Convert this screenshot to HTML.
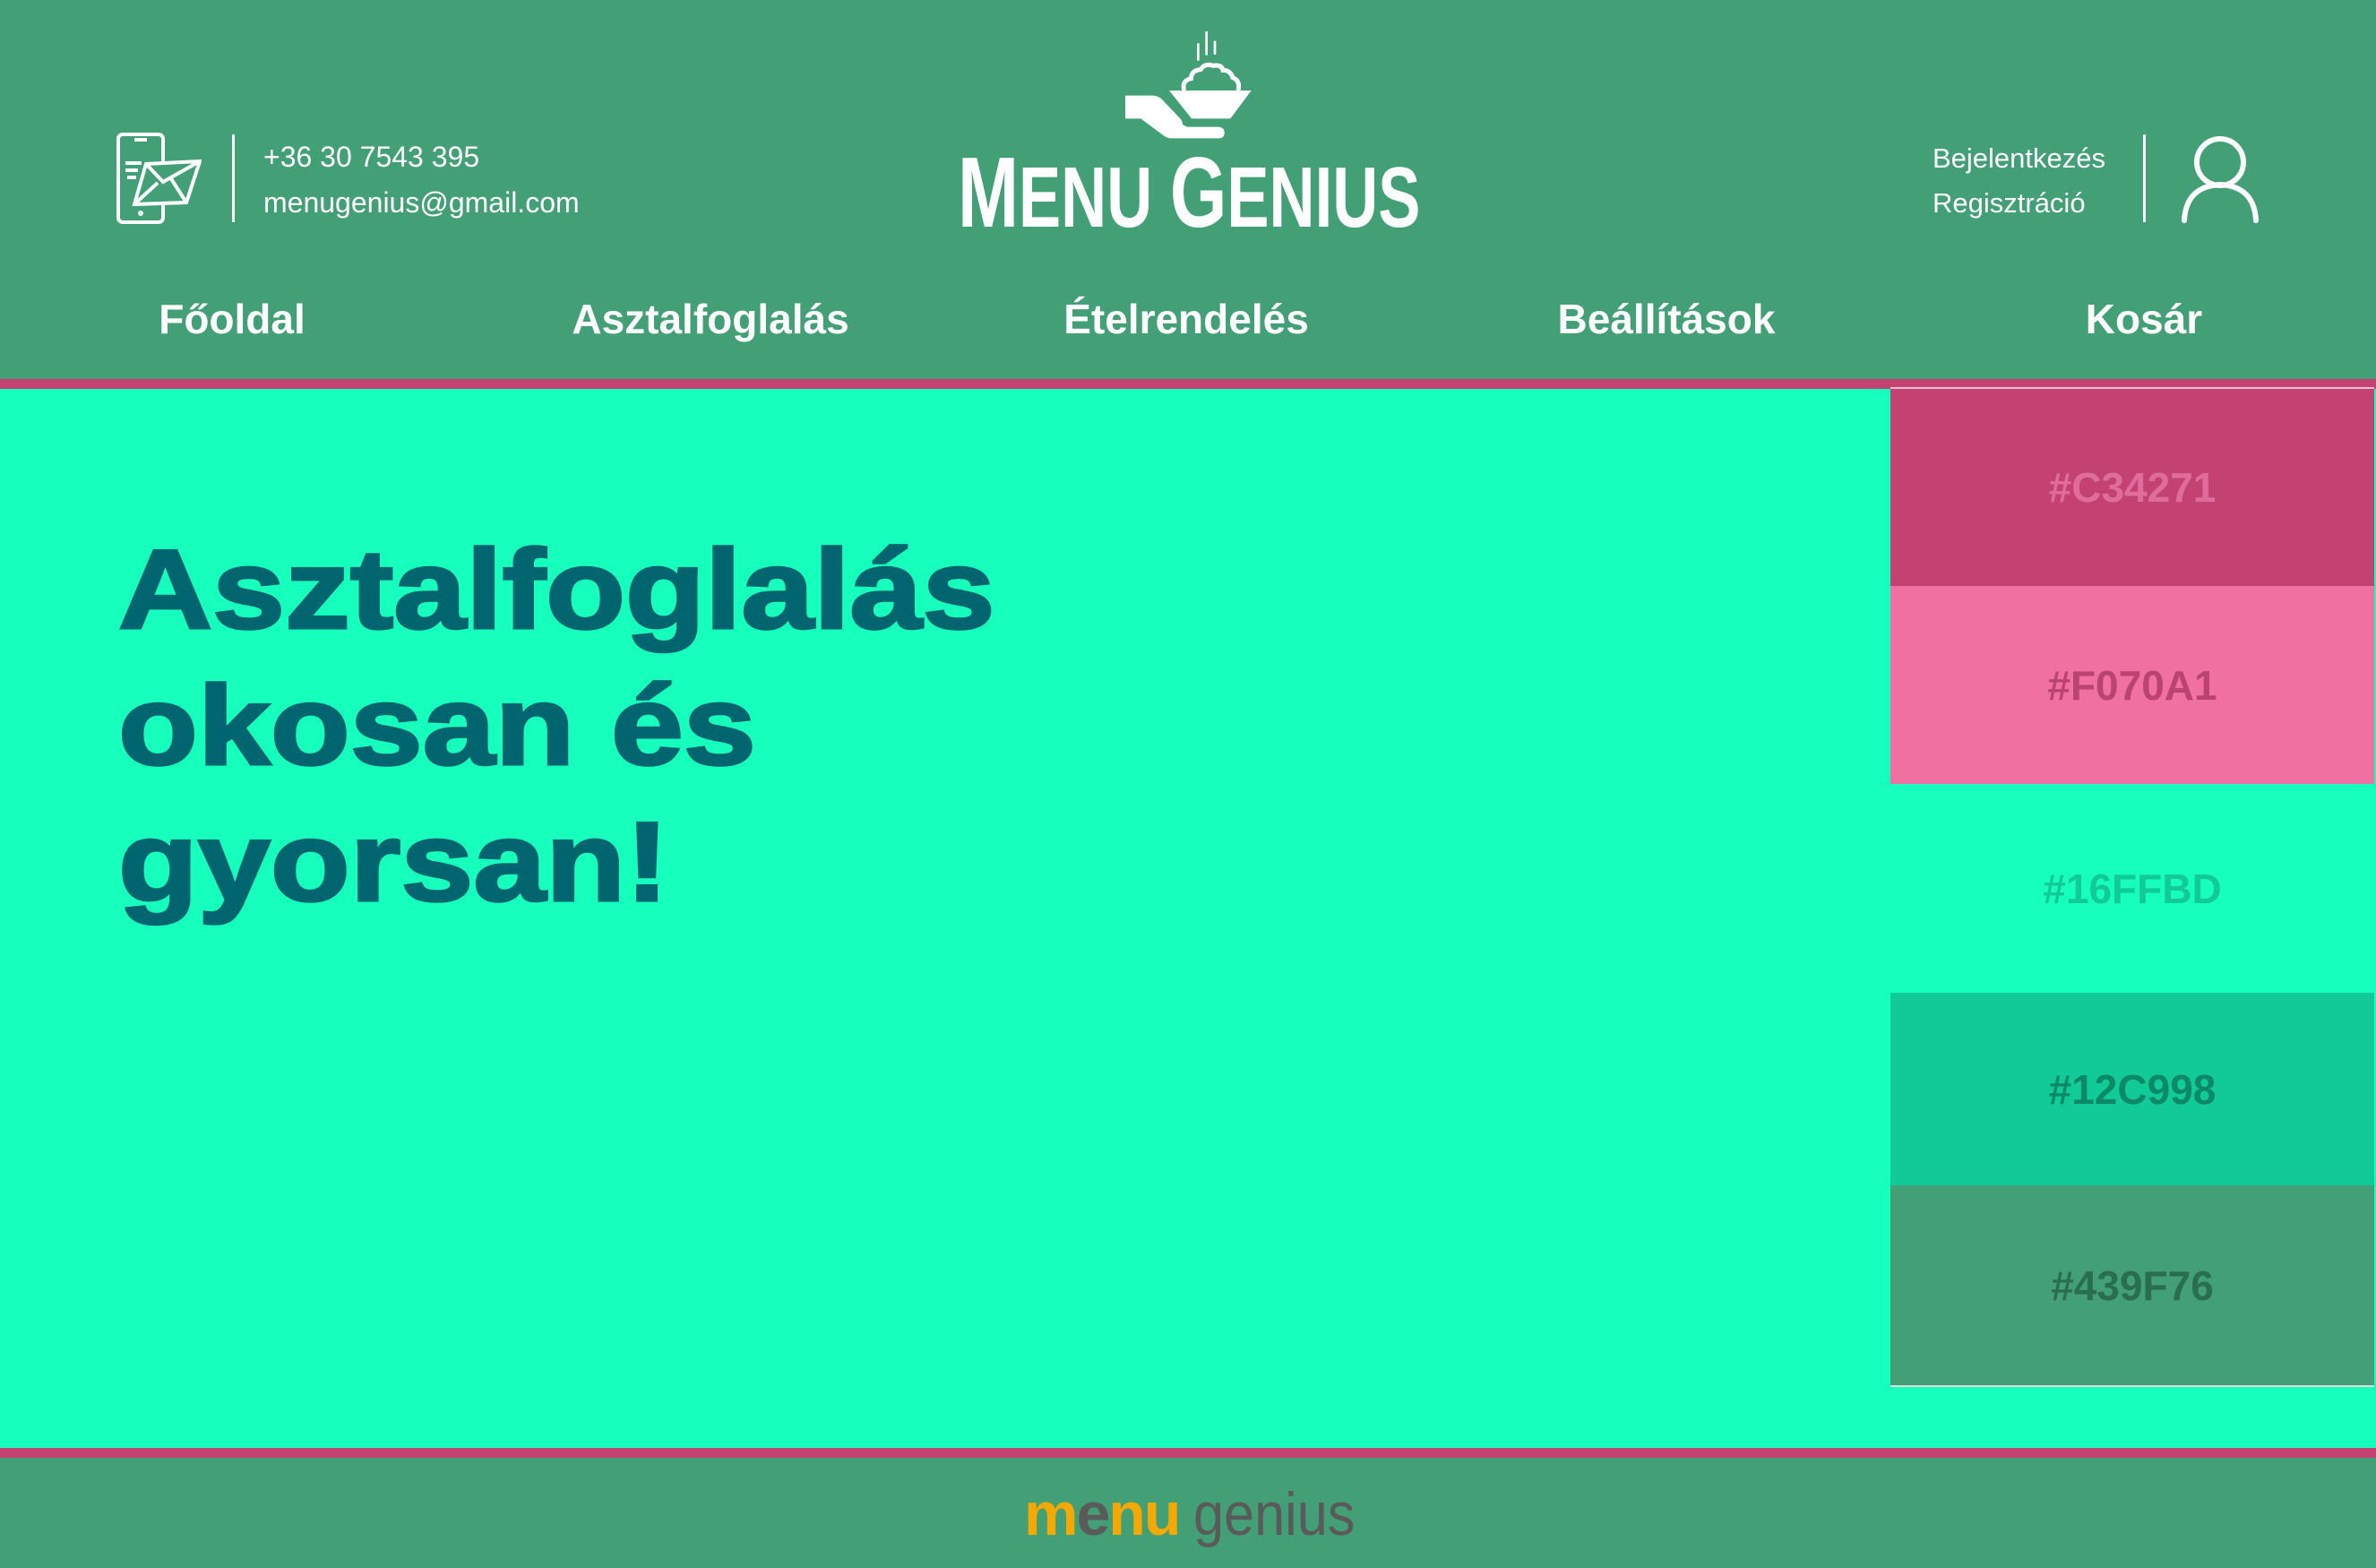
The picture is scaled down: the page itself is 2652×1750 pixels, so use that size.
<!DOCTYPE html>
<html><head><meta charset="utf-8"><style>
*{margin:0;padding:0;box-sizing:border-box}
body{width:2652px;height:1750px;position:relative;overflow:hidden;background:#16FFBD;font-family:"Liberation Sans",sans-serif}
.abs{position:absolute}
.hdr{left:0;top:0;width:2652px;height:423px;background:#439F76}
.pink{left:0;width:2652px;height:11px;background:#C34271}
.ftr{left:0;top:1627px;width:2652px;height:123px;background:#439F76}
.t{color:#fff;white-space:nowrap;line-height:1}
.nav{font-size:46px;font-weight:bold;transform:translateX(-50%)}
.sw{left:2110px;width:540px;display:flex;align-items:center;justify-content:center;font-weight:bold;font-size:46px;font-family:"Liberation Sans",Arial,sans-serif}
h1{position:absolute;left:132px;top:582px;font-size:126px;line-height:152px;color:#00656E;font-weight:bold;transform-origin:0 0;transform:scaleX(1.155);-webkit-text-stroke:3px #00656E}
</style></head><body>
<div class="abs hdr"></div>
<div class="abs pink" style="top:423px"></div>

<svg class="abs" style="left:130px;top:148px" width="95" height="102" viewBox="0 0 95 102" fill="none" stroke="#fff" stroke-width="4">
<rect x="2" y="2" width="50" height="98" rx="5"/>
<line x1="20" y1="8" x2="34" y2="8"/>
<circle cx="27" cy="90" r="3" fill="#fff" stroke="none"/>
<path d="M33 35 L93 32 L78 78 L20 80 Z" fill="#439F76"/>
<path d="M33 35 L52 55 L93 32 M20 80 L46 56 M60 50 L78 78"/>
<path d="M10 34 H28 M10 42 H24 M12 50 H22"/>
</svg>
<div class="abs" style="left:259px;top:150px;width:3px;height:98px;background:#fff"></div>
<div class="abs t" style="left:294px;top:159px;font-size:32px">+36 30 7543 395</div>
<div class="abs t" style="left:294px;top:210px;font-size:32px">menugenius@gmail.com</div>

<svg class="abs" style="left:1230px;top:25px" width="200" height="140" viewBox="0 0 600 420" fill="#fff">
<rect x="318" y="70" width="8" height="58"/><rect x="346" y="30" width="8" height="80"/><rect x="374" y="62" width="8" height="46"/>
<path d="M275 228 Q266 195 298 188 Q300 160 330 158 Q345 135 372 145 Q400 140 405 160 Q430 160 438 185 Q464 195 456 228" fill="none" stroke="#fff" stroke-width="15"/>
<path d="M225 228 H500 L430 322 H300 Z"/>
<path d="M78 245 H170 Q190 245 205 262 L262 322 Q278 342 262 355 Q248 362 236 350 L205 322 L212 317 L240 345 Q252 352 262 338 L285 350 H390 Q410 352 410 370 Q410 388 390 388 H230 Q218 388 205 378 L130 322 H78 Z"/>
</svg>
<div class="abs t" style="left:1069px;top:160px;font-weight:bold;transform-origin:0 0;transform:scaleX(0.736)"><span style="font-size:111px">M</span><span style="font-size:96px">ENU </span><span style="font-size:111px">G</span><span style="font-size:96px">ENIUS</span></div>

<div class="abs t" style="left:2157px;top:161px;font-size:31px">Bejelentkezés</div>
<div class="abs t" style="left:2157px;top:211px;font-size:31px">Regisztráció</div>
<div class="abs" style="left:2392px;top:150px;width:3px;height:98px;background:#fff"></div>
<svg class="abs" style="left:2432px;top:150px" width="92" height="100" viewBox="0 0 92 100" fill="none" stroke="#fff" stroke-width="6" stroke-linecap="round">
<circle cx="46" cy="31" r="26"/>
<path d="M6 96 Q8 58 46 56 Q84 58 86 96"/>
</svg>

<div class="abs t nav" style="left:259px;top:333px">Főoldal</div>
<div class="abs t nav" style="left:793px;top:333px">Asztalfoglalás</div>
<div class="abs t nav" style="left:1324px;top:333px">Ételrendelés</div>
<div class="abs t nav" style="left:1860px;top:333px">Beállítások</div>
<div class="abs t nav" style="left:2393px;top:333px">Kosár</div>

<h1>Asztalfoglalás<br>okosan és<br>gyorsan!</h1>

<div class="abs sw" style="top:432px;height:222px;background:#C34271;color:#DE6E99;border-top:2px solid #e8c0d0">#C34271</div>
<div class="abs sw" style="top:654px;height:221px;background:#F070A1;color:#B8446F">#F070A1</div>
<div class="abs sw" style="top:875px;height:233px;background:#16FFBD;color:#12C998">#16FFBD</div>
<div class="abs sw" style="top:1108px;height:215px;background:#12C998;color:#0C8A68">#12C998</div>
<div class="abs sw" style="top:1323px;height:225px;background:#439F76;color:#2A6E50;border-bottom:2px solid #ddd">#439F76</div>

<div class="abs pink" style="top:1616px"></div>
<div class="abs ftr"></div>
<div class="abs t" style="left:1143px;top:1656px;font-size:68px;font-weight:bold;color:#F5A800;letter-spacing:-2px">m<span style="color:#5a5a5a">e</span>nu</div>
<div class="abs t" style="left:1332px;top:1656px;font-size:68px;color:#5a5a5a;transform-origin:0 0;transform:scaleX(0.9)">genius</div>
</body></html>
